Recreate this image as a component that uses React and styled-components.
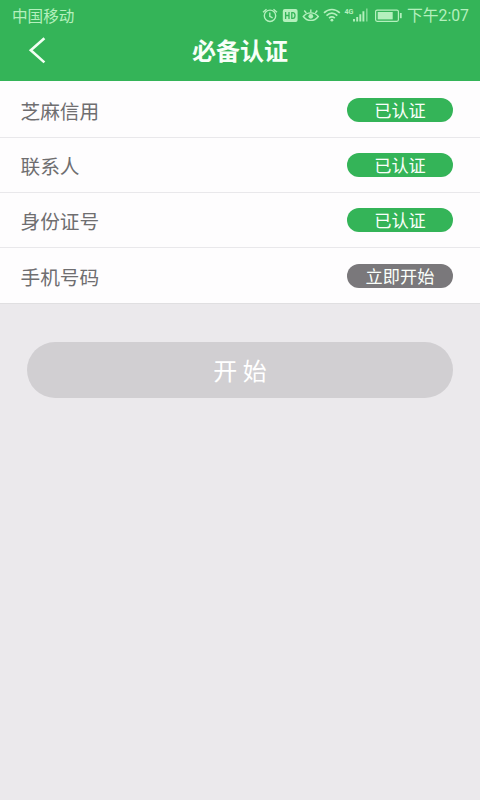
import React from 'react';
import styled, { createGlobalStyle } from 'styled-components';

const GlobalStyle = createGlobalStyle`
  body {
    margin: 0;
    background: #ebe9ec;
    font-family: "Noto Sans CJK SC", sans-serif;
  }
`;

const Page = styled.div`
  width: 480px;
  height: 800px;
  overflow: hidden;
  background: #ebe9ec;
`;

const Header = styled.header`
  height: 81px;
  background: #34b458;
`;

const StatusBar = styled.div`
  height: 31px;
  box-sizing: border-box;
  padding: 0 11px 0 12px;
  display: flex;
  align-items: center;
  color: #b4f0bd;
  font-size: 15.6px;
  line-height: 31px;
`;

const Carrier = styled.span`
  flex: 1;
`;

const StatusIcons = styled.svg`
  display: block;
  width: 144px;
  height: 31px;
`;

const Clock = styled.span`
  width: 65px;
  font-family: Roboto, "Noto Sans CJK SC", sans-serif;
  font-size: 15.8px;
  text-align: right;
  white-space: nowrap;
`;

const TitleBar = styled.div`
  height: 40px;
  display: grid;
  grid-template-columns: 60px 1fr 60px;
  align-items: center;
`;

const BackButton = styled.button`
  height: 40px;
  padding: 0 0 0 28px;
  border: 0;
  background: none;
`;

const BackIcon = styled.svg`
  display: block;
  width: 20px;
  height: 40px;
`;

const Title = styled.h1`
  margin: 0;
  color: #f7fff8;
  font-size: 24px;
  font-weight: 700;
  line-height: 38px;
  padding-bottom: 2px;
  text-align: center;
`;

const List = styled.ul`
  margin: 0;
  padding: 1px 0 0;
  list-style: none;
  background: #fefdfe;
`;

const Row = styled.li`
  height: ${props => props.$height}px;
  box-sizing: border-box;
  padding: 0 27px 0 20.5px;
  border-bottom: 1px solid ${props => (props.$last ? '#e0dfe1' : '#e9e8eb')};
  display: flex;
  align-items: center;
  justify-content: space-between;
`;

const Label = styled.span`
  color: #6f6e70;
  font-size: 19.7px;
  line-height: 28px;
  padding-top: 2px;
`;

const Status = styled.button`
  width: 106px;
  height: 24px;
  padding: 0;
  border: 0;
  border-radius: 12px;
  background: ${props => (props.$done ? '#34b458' : '#7a787b')};
  color: #fafffa;
  font-family: inherit;
  font-size: 17.2px;
  line-height: 24px;
`;

const StartButton = styled.button`
  display: block;
  width: 426px;
  height: 56px;
  margin: 38px 0 0 27px;
  padding: 0;
  border: 0;
  border-radius: 28px;
  background: #d1cfd2;
  color: #fff;
  font-family: inherit;
  font-size: 24px;
  line-height: 56px;
`;

const items = [
  { name: '芝麻信用', done: true, height: 56 },
  { name: '联系人', done: true, height: 55 },
  { name: '身份证号', done: true, height: 55 },
  { name: '手机号码', done: false, height: 56 },
];

const PhoneStatus = () => (
  <StatusIcons viewBox="260 0 144 31" fill="none" stroke="#b4f0bd" strokeWidth="1.4">
    {/* alarm */}
    <circle cx="270" cy="15.8" r="5.7" />
    <path d="M269.8 12.5v3.8l2.8 1.5M263 12.2l3.5-3M277 12.2l-3.5-3" />
    {/* HD */}
    <rect x="282.8" y="9" width="14.8" height="13" rx="2" fill="#b4f0bd" stroke="none" />
    <path d="M285.6 12v7M289 12v7M285.6 15.5h3.4M291.8 12.6v5.8h1c1.5 0 2.2-1 2.2-2.9s-.7-2.9-2.2-2.9z" stroke="#34b458" strokeWidth="1.3" />
    {/* eye comfort */}
    <path d="M303.3 16.5c3.8-4.8 11.2-4.8 15 0c-3.8 5.2-11.2 5.2-15 0z" />
    <circle cx="310.8" cy="16.3" r="2.4" fill="#b4f0bd" stroke="none" />
    <path d="M310.8 12.5V9.5M306.3 13l-2-2.5M315.3 13l2-2.5" />
    {/* wifi */}
    <path d="M324 12.8c4.6-4.4 11.2-4.4 15.8 0M326.5 15.6c3.3-3 7.5-3 10.8 0M329 18.2c1.9-1.6 3.9-1.6 5.8 0" strokeWidth="1.7" />
    <circle cx="331.9" cy="20.2" r="1.4" fill="#b4f0bd" stroke="none" />
    <text x="344.5" y="14" fill="#b4f0bd" stroke="none" fontSize="8" fontWeight="700" textLength="9" lengthAdjust="spacingAndGlyphs" fontFamily="Roboto, sans-serif">4G</text>
    {/* signal */}
    <path d="M354 19v2.5M357.2 17v4.5M360.3 14.2v7.3M363.4 11.3v10.2" strokeWidth="1.9" />
    <path d="M366.8 8.5v13" strokeWidth="1.6" opacity=".6" />
    {/* battery */}
    <rect x="375.6" y="10.1" width="22.8" height="11.2" rx="1.5" strokeWidth="1.2" />
    <rect x="377.7" y="12" width="15" height="7.4" fill="#b4f0bd" stroke="none" />
    <path d="M400.8 13v5.2" strokeWidth="1.8" />
  </StatusIcons>
);

export default function App() {
  return (
    <Page>
      <GlobalStyle />
      <Header>
        <StatusBar>
          <Carrier>中国移动</Carrier>
          <PhoneStatus />
          <Clock>下午2:07</Clock>
        </StatusBar>
        <TitleBar>
          <BackButton aria-label="返回">
            <BackIcon viewBox="0 0 20 40" fill="none" stroke="#f2fff3" strokeWidth="2.6">
              <path d="M16.4 7.2L2.8 19.3L16.4 31.4" />
            </BackIcon>
          </BackButton>
          <Title>必备认证</Title>
        </TitleBar>
      </Header>
      <List>
        {items.map((item, i) => (
          <Row key={item.name} $height={item.height} $last={i === items.length - 1}>
            <Label>{item.name}</Label>
            <Status $done={item.done}>{item.done ? '已认证' : '立即开始'}</Status>
          </Row>
        ))}
      </List>
      <StartButton>开 始</StartButton>
    </Page>
  );
}
